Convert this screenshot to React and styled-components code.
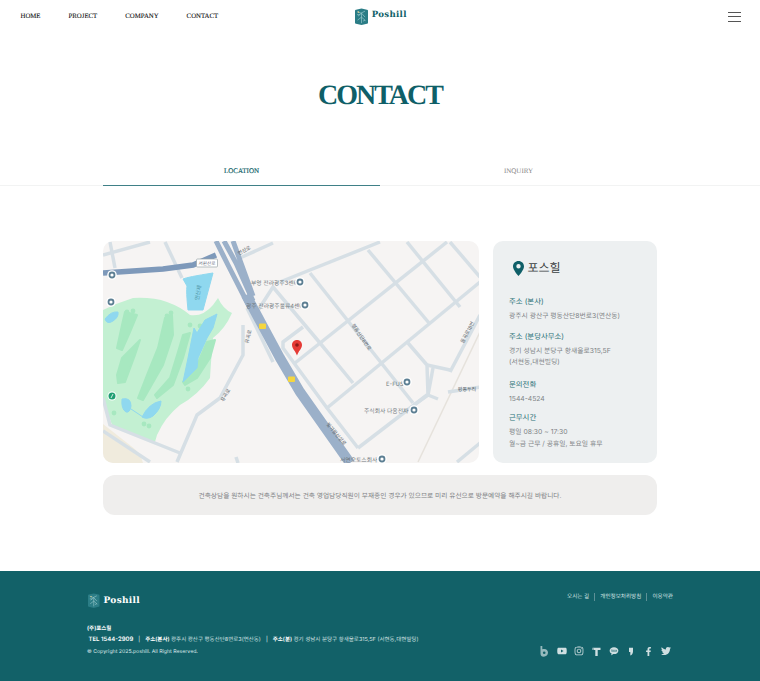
import React from 'react'
import styled, { createGlobalStyle } from 'styled-components'
import { FaYoutube, FaInstagram, FaFacebookF, FaTwitter } from 'react-icons/fa'
import { RiKakaoTalkFill } from 'react-icons/ri'

const teal = '#0f5f68'
const sans = '"Inter", "Noto Sans CJK KR", sans-serif'
const serif = '"Liberation Serif", "Noto Sans CJK KR", serif'

const GlobalStyle = createGlobalStyle`
  html, body {
    margin: 0;
    padding: 0;
    background: #fff;
    overflow: hidden;
    text-rendering: geometricPrecision;
  }
  * {
    box-sizing: border-box;
  }
`

const Page = styled.div`
  width: 760px;
  height: 681px;
  display: flex;
  flex-direction: column;
  font-family: ${sans};
`

const Header = styled.header`
  height: 33px;
  display: grid;
  grid-template-columns: 1fr auto 1fr;
  align-items: center;
  padding: 0 19px 0 20.5px;
`

const Nav = styled.nav`
  display: flex;
  gap: 28px;
  font-family: ${serif};
  font-size: 6.8px;
  color: #111;
  -webkit-text-stroke: 0.1px #111;
`

const LogoWrap = styled.div`
  display: flex;
  align-items: center;
  gap: 4px;
  color: ${(p) => (p.$light ? '#fff' : teal)};
  svg {
    margin-left: ${(p) => (p.$light ? '1px' : '0')};
  }
`

const LogoText = styled.span`
  font-family: "DejaVu Serif", serif;
  font-weight: 600;
  font-size: ${(p) => (p.$light ? '9px' : '8.6px')};
  letter-spacing: 0.3px;
  position: relative;
  top: ${(p) => (p.$light ? '0' : '-1.5px')};
`

const Burger = styled.button`
  justify-self: end;
  width: 13px;
  height: 10px;
  padding: 0;
  border: 0;
  background: none;
  display: flex;
  flex-direction: column;
  justify-content: space-between;
  span {
    display: block;
    height: 1px;
    background: #555;
  }
`

const Title = styled.h1`
  margin: 48px 0 0;
  text-align: center;
  font-family: ${serif};
  font-weight: 700;
  font-size: 28px;
  line-height: 30px;
  letter-spacing: -2px;
  color: ${teal};
`

const TabBar = styled.div`
  margin-top: 45px;
  border-bottom: 1px solid #f2f3f3;
`

const TabRow = styled.div`
  width: 554px;
  margin: 0 auto;
  display: flex;
`

const Tab = styled.div`
  flex: 1;
  height: 30px;
  margin-bottom: -1px;
  display: flex;
  align-items: center;
  justify-content: center;
  font-family: ${serif};
  font-size: 7px;
  color: ${(p) => (p.$active ? teal : '#888')};
  border-bottom: ${(p) => (p.$active ? '1.5px solid #3f8087' : '0')};
  -webkit-text-stroke: ${(p) => (p.$active ? `0.15px ${teal}` : '0')};
`

const Main = styled.main`
  width: 554px;
  margin: 55px auto 0;
  display: flex;
  flex-direction: column;
  gap: 12px;
`

const Row = styled.div`
  display: flex;
  gap: 14px;
  height: 222px;
`

const MapBox = styled.svg`
  display: block;
  width: 376px;
  height: 222px;
  border-radius: 10px;
  background: #f6f4f3;
  flex: none;
`

const InfoCard = styled.aside`
  flex: 1;
  background: #edf0f1;
  border-radius: 10px;
  padding: 19px 16px 0;
`

const InfoTitle = styled.h2`
  margin: 0 0 20px;
  display: flex;
  align-items: center;
  gap: 4px;
  padding-left: 3.5px;
  font-weight: 400;
  font-size: 12px;
  line-height: 16px;
  color: #3a3f42;
`

const InfoGroup = styled.div`
  margin-bottom: ${(p) => p.$gap}px;
`

const InfoLabel = styled.div`
  font-size: 7.4px;
  line-height: 12px;
  margin-bottom: 2px;
  color: #2a7078;
`

const InfoText = styled.div`
  font-size: 6.8px;
  line-height: 11.7px;
  color: #7f8487;
`

const Notice = styled.div`
  height: 40px;
  border-radius: 12px;
  background: #efeeed;
  display: flex;
  align-items: center;
  justify-content: center;
  font-size: 6.7px;
  color: #808285;
`

const Footer = styled.footer`
  margin-top: 56px;
  height: 110px;
  background: #126168;
  padding: 22px 87px 0;
  display: flex;
  justify-content: space-between;
  color: #fff;
`

const FooterLeft = styled.div`
  display: flex;
  flex-direction: column;
`

const FooterInfo = styled.div`
  margin-top: 16px;
  font-size: 5.5px;
`

const Company = styled.div`
  font-weight: 700;
  line-height: 10px;
`

const AddressLine = styled.div`
  line-height: 11px;
  padding-left: 1.5px;
  color: #d5e2e3;
  b {
    color: #fff;
    font-weight: 600;
  }
  i {
    font-style: normal;
    margin: 0 5px;
    color: #fff;
  }
`

const Tel = styled.b`
  font-size: 6px;
`

const Copyright = styled.div`
  margin-top: 1px;
  line-height: 10px;
  font-size: 5.2px;
  color: #dfe9ea;
`

const FooterRight = styled.div`
  display: flex;
  flex-direction: column;
  align-items: flex-end;
`

const FooterLinks = styled.div`
  display: flex;
  align-items: center;
  font-size: 5.6px;
  line-height: 8px;
  color: #d9e5e6;
  span + span {
    margin-left: 5px;
    padding-left: 5px;
    border-left: 1px solid #5d9096;
  }
`

const Socials = styled.div`
  margin-top: 45px;
  margin-right: 2px;
  display: flex;
  gap: 7.4px;
  color: #cfdfe1;
`

const Social = styled.div`
  width: 10px;
  height: 10px;
  display: flex;
  align-items: center;
  justify-content: center;
  svg {
    display: block;
  }
`

const LogoMark = ({ size = 13 }) => (
  <svg width={size} height={size * 1.33} viewBox="0 0 13 17">
    <path d="M1 1.500 6.500 .4 12 1.500c.6.1 1 .5 1 1v12c0 .5-.4.9-1 1L6.500 16.800 1 15.500c-.6-.1-1-.5-1-1v-12c0-.5.4-.9 1-1Z" fill="#2b7d86" />
    <path d="M2 3.500 6 5l4-2M3 8l3.500-3 3.500 4M2.500 12l4-3 4 3.500M6.500 5v10M2 6.500h3M8 13l2-1" stroke="#a8d3d6" strokeWidth=".6" fill="none" />
    <circle cx="3.500" cy="4" r=".8" fill="#d9c98c" />
  </svg>
)

const BlogIcon = () => (
  <svg width="10" height="11" viewBox="0 0 10 11" fill="currentColor">
    <path d="M1.500 0h1.800v3.300C3.900 3 4.500 2.900 5.200 2.900c2.300 0 3.800 1.500 3.800 3.700 0 2.500-1.800 4.100-4.300 4.100C2.800 10.700 1.500 9.600 1.500 7.500Z" opacity=".7" />
    <circle cx="5.200" cy="6.700" r="1.300" fill="#126168" />
  </svg>
)

const TistoryIcon = () => (
  <svg width="9" height="9" viewBox="0 0 9 9" fill="currentColor">
    <path d="M.5 .8h8v2.200H5.700V9H3.300V3H.5Z" />
    <circle cx="1.500" cy="2" r=".5" fill="#126168" />
  </svg>
)

const CommaIcon = () => (
  <svg width="6" height="9" viewBox="0 0 6 9" fill="currentColor">
    <path d="M1 .8h4v3.600C5 6.200 4 7.900 2.300 8.500V5H1Z" />
  </svg>
)

const lightRoads = [
  'M177 41 277 1',
  'M192 122 344 1',
  'M224 167 377 41',
  'M255 207 324 154',
  'M265 9 326 82',
  'M304 1 357 66',
  'M207 32 310 162',
  'M347 1 377 36',
  'M154 71 170 46 217 102 250 142',
  'M200 86 180 101 180 107 224 167 255 207',
  'M305 102 324 124 325 154 311 164',
  'M324 124 347 129',
  'M330 127 325 154',
  'M325 154 335 158',
  'M345 151 377 146',
  'M347 131 377 74',
  'M354 221 377 202',
  'M62 1 79 37',
  'M7 1 12 27',
  'M0 14 47 1',
  'M137 17 170 2',
  'M140 84 140 114 117 157 94 174 74 221',
  'M144 67 170 121',
  'M0 157 7 184 77 212',
  'M0 190 47 221',
  'M133 216 135 222',
]

const lakes = [
  'M80 38Q84 36 110 32L100 69H85Q83 50 84 45Z',
  'M102 79 114 73 110 87 104 97 95 117 94 127 80 141 85 117 91 87 94 92Z',
  'M2 78Q8 70 15 71 16 76 10 80 4 84 2 78Z',
  'M19 158Q28 156 28 165 27 172 23 171 18 168 19 158Z',
  'M39 176Q46 162 58 160 58 168 50 175 44 179 39 176Z',
]

const fairways = [
  'M22 71 34 74 27 91 19 109 14 107 19 84Z',
  'M37 99 32 114 22 141 15 142 14 134 19 117Z',
  'M69 74 70 94 60 124 40 159 35 157 44 134 55 107 62 77Z',
  'M87 92 80 117 70 144 54 157 52 154 67 137 75 111 80 94Z',
  'M112 99 107 117 94 137 82 144 80 141 94 124 104 101Z',
]

const fairwayDots = [
  [30, 70],
  [24, 71],
  [68, 72],
  [64, 75],
  [87, 84],
  [97, 85],
  [85, 148],
  [11, 172],
  [41, 183],
  [46, 185],
]

const poiLabels = [
  { x: 148, y: 44, t: '부영 전라광주3센터' },
  { x: 143, y: 67, t: '광주 전라광주물류4센터' },
  { x: 283, y: 145, t: 'E-FUS' },
  { x: 261, y: 172, t: '주식회사 다움전자' },
  { x: 237, y: 221, t: '서연오토스회사' },
]

const pois = [
  [9, 34],
  [8, 61],
  [197, 41],
  [202, 64],
  [304, 141],
  [311, 169],
  [279, 218],
]

const roadLabels = [
  { x: 142, y: 11, r: -28, t: '연산로' },
  { x: 147, y: 96, r: -75, t: '유곡로' },
  { x: 124, y: 155, r: -60, t: '유곡로' },
  { x: 257, y: 97, r: 56, t: '평동산단8번로' },
  { x: 232, y: 194, r: 50, t: '빛가람산성로' },
  { x: 366, y: 92, r: -62, t: '동곡로18번' },
  { x: 364, y: 150, r: 0, t: '평동두리' },
]

const ContactMap = () => (
  <MapBox viewBox="0 0 376 222">
    <path d="M0 183 28 205Q38 212 40 222H0Z" fill="#f0ebdd" />
    <path d="M0 69Q14 62 30 57 50 56 64 61 78 66 87 74 100 76 110 64L115 57Q120 68 129 72 122 88 110 97 108 120 107 137 95 154 77 164 62 176 54 194L52 201 10 186 0 161Z" fill="#c3f0d2" />
    {fairways.map((d) => (
      <path key={d} d={d} fill="#a7e8c0" stroke="#a7e8c0" strokeWidth="2" strokeLinejoin="round" />
    ))}
    {fairwayDots.map(([x, y]) => (
      <circle key={x + '-' + y} cx={x} cy={y} r="2.400" fill="#a7e8c0" />
    ))}
    {lakes.map((d) => (
      <path key={d} d={d} fill="#8fd8ef" stroke="#8fd8ef" strokeWidth="1" strokeLinejoin="round" />
    ))}
    <path d="M28 168 40 176" stroke="#8fd8ef" strokeWidth="1" />
    <path d="M315 221 377 91" stroke="#e6e2dc" strokeWidth="1.500" />
    {lightRoads.map((d) => (
      <path key={d} d={d} fill="none" stroke="#d6dfe5" strokeWidth="3.500" strokeLinejoin="round" />
    ))}
    <path d="M0 32 60 28 90 24 113 14" fill="none" stroke="#7e99ba" strokeWidth="5.500" />
    <path d="M113 0 125 24 147 67M121 0 133 22 150 60M130 0 138 22 150 55" fill="none" stroke="#9bb0c9" strokeWidth="5" />
    <path d="M143 54 177 117 197 151 247 222" fill="none" stroke="#9bb0c9" strokeWidth="10" />
    <g fontFamily={sans}>
      <rect x="93.500" y="18" width="21" height="8" rx="1" fill="#fff" stroke="#9aa3a8" strokeWidth=".7" />
      <text x="104" y="24" fontSize="4.600" fill="#667" textAnchor="middle">서원산로</text>
      <text x="97" y="52" fontSize="5.500" fill="#4f97a8" transform="rotate(-80 97 52)" textAnchor="middle">연산제</text>
      {poiLabels.map((l) => (
        <text key={l.t} x={l.x} y={l.y} fontSize="5.800" fill="#6f777c">{l.t}</text>
      ))}
      {roadLabels.map((l) => (
        <text key={l.t + l.x} x={l.x} y={l.y} fontSize="5" fill="#555d66" textAnchor="middle" transform={`rotate(${l.r} ${l.x} ${l.y})`}>{l.t}</text>
      ))}
    </g>
    {pois.map(([x, y]) => (
      <g key={x + '-' + y}>
        <circle cx={x} cy={y} r="4.800" fill="#fff" />
        <circle cx={x} cy={y} r="3.400" fill="#5d7f93" />
        <circle cx={x} cy={y} r="1.600" fill="#fff" />
      </g>
    ))}
    <circle cx="9" cy="155" r="4.500" fill="#fff" />
    <circle cx="9" cy="155" r="3.500" fill="#1f9e72" />
    <path d="M8 157 10 153" stroke="#fff" strokeWidth=".8" />
    <rect x="156" y="82.500" width="7" height="5.500" rx="1" fill="#f5d63f" />
    <rect x="185" y="135.500" width="7" height="5.500" rx="1" fill="#f5d63f" />
    <path d="M194 99c-3 0-5 2.300-5 5 0 3.500 3.500 6 5 10.500 1.500-4.500 5-7 5-10.500 0-2.700-2-5-5-5Z" fill="#e53a35" />
    <circle cx="194" cy="104" r="1.800" fill="#8d1b17" />
  </MapBox>
)

const App = () => (
  <Page>
    <GlobalStyle />
    <Header>
      <Nav>
        <span>HOME</span>
        <span>PROJECT</span>
        <span>COMPANY</span>
        <span>CONTACT</span>
      </Nav>
      <LogoWrap>
        <LogoMark />
        <LogoText>Poshill</LogoText>
      </LogoWrap>
      <Burger aria-label="menu">
        <span />
        <span />
        <span />
      </Burger>
    </Header>

    <Title>CONTACT</Title>

    <TabBar>
      <TabRow>
        <Tab $active>LOCATION</Tab>
        <Tab>INQUIRY</Tab>
      </TabRow>
    </TabBar>

    <Main>
      <Row>
        <ContactMap />
        <InfoCard>
          <InfoTitle>
            <svg width="11" height="15" viewBox="0 0 11 15">
              <path d="M5.500 0C2.400 0 0 2.400 0 5.400 0 9 5.500 15 5.500 15S11 9 11 5.400C11 2.400 8.600 0 5.500 0Zm0 7.500a2.200 2.200 0 1 1 0-4.400 2.200 2.200 0 0 1 0 4.400Z" fill={teal} />
            </svg>
            포스힐
          </InfoTitle>
          <InfoGroup $gap={9}>
            <InfoLabel>주소 (본사)</InfoLabel>
            <InfoText>광주시 광산구 평동산단8번로3(연산동)</InfoText>
          </InfoGroup>
          <InfoGroup $gap={11}>
            <InfoLabel>주소 (분당사무소)</InfoLabel>
            <InfoText>경기 성남시 분당구 황새울로315,5F</InfoText>
            <InfoText>(서현동,대현빌딩)</InfoText>
          </InfoGroup>
          <InfoGroup $gap={7}>
            <InfoLabel>문의전화</InfoLabel>
            <InfoText>1544-4524</InfoText>
          </InfoGroup>
          <InfoGroup $gap={0}>
            <InfoLabel>근무시간</InfoLabel>
            <InfoText>평일 08:30 ~ 17:30</InfoText>
            <InfoText>월~금 근무 / 공휴일, 토요일 휴무</InfoText>
          </InfoGroup>
        </InfoCard>
      </Row>
      <Notice>건축상담을 원하시는 건축주님께서는 건축 영업담당직원이 부재중인 경우가 있으므로 미리 유선으로 방문예약을 해주시길 바랍니다.</Notice>
    </Main>

    <Footer>
      <FooterLeft>
        <LogoWrap $light>
          <LogoMark size={11.500} />
          <LogoText $light>Poshill</LogoText>
        </LogoWrap>
        <FooterInfo>
          <Company>(주)포스힐</Company>
          <AddressLine>
            <Tel>TEL 1544-2909</Tel>
            <i>|</i>
            <b>주소(본사)</b> 광주시 광산구 평동산단8번로3(연산동)
            <i>|</i>
            <b>주소(분)</b> 경기 성남시 분당구 황새울로315,5F (서현동,대현빌딩)
          </AddressLine>
          <Copyright>© Copyright 2025.poshill. All Right Reserved.</Copyright>
        </FooterInfo>
      </FooterLeft>
      <FooterRight>
        <FooterLinks>
          <span>오시는 길</span>
          <span>개인정보처리방침</span>
          <span>이용약관</span>
        </FooterLinks>
        <Socials>
          <Social><BlogIcon /></Social>
          <Social><FaYoutube size={10} /></Social>
          <Social><FaInstagram size={10} /></Social>
          <Social><TistoryIcon /></Social>
          <Social><RiKakaoTalkFill size={10} /></Social>
          <Social><CommaIcon /></Social>
          <Social><FaFacebookF size={9} /></Social>
          <Social><FaTwitter size={10} /></Social>
        </Socials>
      </FooterRight>
    </Footer>
  </Page>
)

export default App
